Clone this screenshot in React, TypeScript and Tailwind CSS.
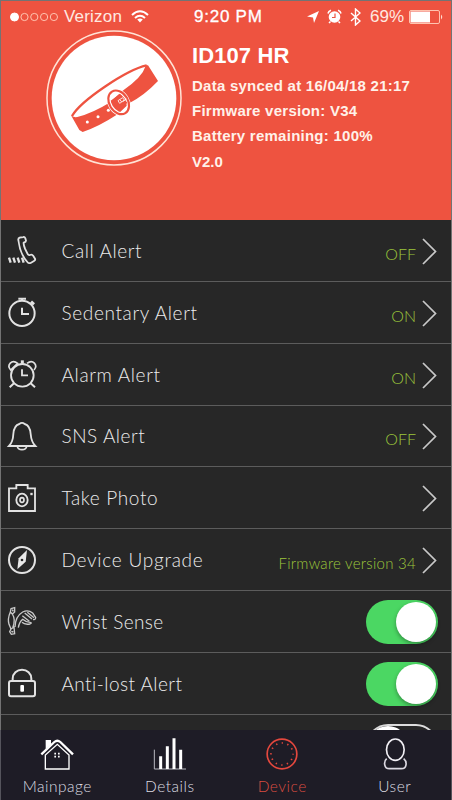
import React, { useState } from 'react';

const CallIcon = () => (
  <>
    <path d="M31 12Q30 7 35 5L46 3Q50 2 52 7L54 14Q54 18 47 20Q46 24 51 38L58 52Q61 59 66 57Q72 54 76 60L81 68Q83 72 78 75L68 81Q62 83 58 78Q36 54 31 12Z" strokeWidth="5.5" />
    <path d="M3 65L8 80M16 65L21 80M29 65L34 80M42 65L47 80" strokeWidth="7" />
  </>
);

const StopwatchIcon = () => (
  <>
    <circle cx="42" cy="46" r="38" />
    <path d="M42 29V48H63" />
    <path d="M31 2H54M42 2V8" strokeWidth="6" />
    <path d="M69 11L78 19" strokeWidth="9" />
  </>
);

const AlarmIcon = () => (
  <>
    <circle cx="43" cy="46" r="34" strokeWidth="5.5" />
    <path d="M42 28V46H60" strokeWidth="5.5" />
    <path d="M43 1V11" strokeWidth="9" />
    <path d="M8 30C-5 16 11 -4 29 10L8 30ZM78 30C91 16 75 -4 57 10" strokeWidth="5" />
    <path d="M18 70L5 82M68 70L81 82" strokeWidth="6" />
  </>
);

const BellIcon = () => (
  <>
    <path d="M3 72Q15 60 16 36Q18 10 34 6Q42 -1 50 6Q66 10 68 36Q70 60 82 72Z" strokeWidth="5.5" />
    <path d="M28 74Q30 83 42 83Q54 83 56 74" strokeWidth="5" />
  </>
);

const CameraIcon = () => (
  <>
    <path d="M3 13H25V3H59V13H81V81H3Z" strokeWidth="5.5" />
    <ellipse cx="42" cy="48" rx="17" ry="19" strokeWidth="5.5" />
    <ellipse cx="42" cy="48" rx="6" ry="7" strokeWidth="5" />
    <path d="M67 30H74" strokeWidth="7" />
  </>
);

const CompassIcon = () => (
  <>
    <circle cx="42" cy="42" r="39" strokeWidth="6" />
    <path d="M57 12L53 47L28 70L32 37Z" fill="#e8e8e8" stroke="none" />
    <circle cx="42" cy="42" r="4" fill="#272727" stroke="none" />
  </>
);

const WristIcon = () => (
  <g strokeWidth="4" stroke="#c9c9c9">
    <path d="M9 5L20 2L20 15L13 21L7 15ZM7 15Q-2 36 3 52L9 66M13 21Q24 38 14 62M9 66L18 60L20 80L10 82L5 74ZM13 8L16 13M10 73L16 75" />
    <path d="M21 60Q22 28 44 15Q60 7 74 18L83 31Q83 40 75 37" />
    <path d="M31 62Q34 44 44 37Q54 46 66 46Q74 48 66 51Q50 54 42 46" />
    <path d="M50 18L72 36M43 26L64 43M58 16L78 32" />
  </g>
);

const LockIcon = () => (
  <>
    <rect x="3" y="36" width="78" height="46" rx="6" />
    <path d="M14 36V29A28 27 0 0 1 70 29V36" />
    <rect x="37" y="48" width="11" height="20" rx="3" fill="#fff" stroke="none" />
  </>
);

const rows = [
  { label: 'Call Alert', icon: CallIcon, value: 'OFF', spacing: 'tracking-[0.6px]' },
  { label: 'Sedentary Alert', icon: StopwatchIcon, value: 'ON', spacing: 'tracking-[0.65px]' },
  { label: 'Alarm Alert', icon: AlarmIcon, value: 'ON', spacing: 'tracking-[0.65px]' },
  { label: 'SNS Alert', icon: BellIcon, value: 'OFF', spacing: 'tracking-[0.55px]' },
  { label: 'Take Photo', icon: CameraIcon, value: '', spacing: 'tracking-[0.65px]' },
  { label: 'Device Upgrade', icon: CompassIcon, value: 'Firmware version 34', spacing: 'tracking-[0.75px]' },
];

const Toggle = ({ on, onClick }: { on: boolean; onClick: () => void }) => (
  <button
    onClick={onClick}
    className={`mr-px mt-px flex h-11 w-[72px] items-center rounded-full ${on ? 'justify-end bg-[#4bd763] pr-[2px]' : 'justify-start border-2 border-[#dedede]'}`}
  >
    <span className="size-10 rounded-full bg-white shadow-[0_2px_4px_rgba(0,0,0,0.35)]" />
  </button>
);

const Row = ({ icon: Icon, label, spacing, children }: { icon?: React.FC; label: string; spacing?: string; children: React.ReactNode }) => (
  <div className="flex h-[61.85px] shrink-0 items-center border-b border-[#5c5c5c] pl-[7px] pr-[12px]">
    <svg width="28" height="28" viewBox="0 0 84 84" fill="none" stroke="#e2e2e2" strokeWidth="6" className="shrink-0 overflow-visible">
      {Icon && <Icon />}
    </svg>
    <span className={`ml-[25.5px] mt-px flex-1 whitespace-nowrap text-[19px] font-light leading-6 text-[#ececec] ${spacing}`}>{label}</span>
    {children}
  </div>
);

const StatusBar = () => (
  <div className="flex h-[29px] items-center pl-[9px] pt-[2px] font-['Liberation_Sans',sans-serif] text-[17px] leading-5 text-[#ffe9e0]">
    <svg width="50" height="10" viewBox="0 0 50 10" fill="none" stroke="#ffc4b0">
      <circle cx="4.5" cy="5" r="4" fill="#fff" stroke="#fff" />
      <circle cx="14.5" cy="5" r="3.6" />
      <circle cx="24.3" cy="5" r="3.6" />
      <circle cx="34.1" cy="5" r="3.6" />
      <circle cx="43.9" cy="5" r="3.6" />
    </svg>
    <span className="ml-[4px] w-[67px] tracking-[0.2px]">Verizon</span>
    <svg width="18" height="13" viewBox="0 0 18 13" fill="none" stroke="#fff" strokeWidth="2">
      <path d="M1 5Q9 -2.4 17 5M4 8Q9 3.6 14 8" />
      <path d="M6.2 9.6Q9 7.5 11.8 9.6L9 12.5Z" fill="#fff" stroke="none" />
    </svg>
    <span className="ml-[45px] w-[113px] whitespace-nowrap tracking-[0.75px] text-white [-webkit-text-stroke:0.3px_white]">9:20 PM</span>
    <svg width="12" height="12" viewBox="0 0 12 12" fill="#fff">
      <path d="M12 0L7 12L6 6.5L0 5.5Z" />
    </svg>
    <svg width="15" height="15" viewBox="0 0 15 15" fill="none" className="ml-[8px]">
      <circle cx="7.5" cy="8" r="5.8" fill="#fff" />
      <path d="M1 4.5Q1.5 2 4 1.2M14 4.5Q13.5 2 11 1.2" stroke="#fff" strokeWidth="1.6" />
      <path d="M3.5 12.5L2 14M11.5 12.5L13 14" stroke="#fff" strokeWidth="1.5" />
      <path d="M8 4.5V8.5H5" stroke="#ee5340" strokeWidth="1.2" />
    </svg>
    <svg width="11" height="18" viewBox="0 0 11 18" fill="none" stroke="#fff" strokeWidth="1.4" className="ml-[8px]">
      <path d="M1 5L10 13L5.5 17V1L10 5L1 13" />
    </svg>
    <span className="ml-[9px] w-[39px] text-[17px]">69%</span>
    <svg width="35" height="14" viewBox="0 0 35 14" fill="none">
      <rect x="0.5" y="0.5" width="30" height="13" rx="1.5" stroke="#ffc4b0" />
      <rect x="1.5" y="1.5" width="19.5" height="11" fill="#fff" />
      <path d="M32 4.5Q34.5 7 32 9.5Z" fill="#ffd9cc" />
    </svg>
  </div>
);

const DeviceBadge = () => (
  <svg width="136" height="136" viewBox="46 28 408 408" fill="none" className="ml-[44.5px]">
    <circle cx="250" cy="232" r="201" stroke="#ffe3d6" strokeWidth="4.5" />
    <circle cx="250" cy="232" r="187" fill="#fff" />
    <path d="M124 286C150 240 286 148 348 134" stroke="#ee5340" strokeWidth="7" />
    <path d="M121 284Q127 291 140 289Q188 276 236 246L276 210Q334 172 346 134L352 134L382 181Q340 225 298 246L262 280Q204 318 156 334L146 328Z" fill="#ee5340" />
    <ellipse cx="264" cy="245" rx="27" ry="38" transform="rotate(-32 264 245)" stroke="#fff" strokeWidth="12" />
    <path d="M240 240L268 220L290 246L264 272Z" fill="#ee5340" />
    <ellipse cx="264" cy="245" rx="28" ry="38" transform="rotate(-32 264 245)" stroke="#ee5340" strokeWidth="6.5" />
    <path d="M262 240L276 231L281 238L267 248ZM268 237L273 244M276 243L288 235" stroke="#fff" strokeWidth="2.5" />
    <circle cx="170" cy="304" r="4.5" fill="#fff" />
    <circle cx="202" cy="288" r="4.5" fill="#fff" />
    <circle cx="233" cy="269" r="4.5" fill="#fff" />
  </svg>
);

const HouseIcon = () => (
  <>
    <path d="M138 121H154V135L138 148Z" fill="#fff" />
    <path d="M125 164L164 127Q173 119 182 127L220 164" stroke="#fff" strokeWidth="7" />
    <path d="M137 166V208H208V166L173 134Z" stroke="#fff" strokeWidth="4" />
    <path d="M164 162H169M175 162H180M164 171H169M175 171H180" stroke="#fff" strokeWidth="5" />
  </>
);

const ChartIcon = () => (
  <>
    <path d="M461 150V208H556" stroke="#b9b9c0" strokeWidth="3" />
    <path d="M480 170V208M500 140V208M520 116V208M540 150V208" stroke="#fff" strokeWidth="9" />
  </>
);

const DialIcon = () => (
  <>
    <circle cx="169" cy="163" r="44.5" stroke="#e5483e" strokeWidth="5" />
    <circle cx="169" cy="163" r="33" stroke="#e5483e" strokeWidth="5" strokeDasharray="4 13.28" strokeDashoffset="2" />
  </>
);

const UserIcon = () => (
  <>
    <path d="M480 177C470 186 472 207 488 207H524C541 207 542 186 531 177" stroke="#dcd9e2" strokeWidth="5" />
    <ellipse cx="506" cy="150" rx="26.5" ry="32" stroke="#f2f0f5" strokeWidth="5" />
  </>
);

const tabs = [
  { label: 'Mainpage', icon: HouseIcon, box: '121 115 102 96' },
  { label: 'Details', icon: ChartIcon, box: '457 115 102 96' },
  { label: 'Device', icon: DialIcon, box: '118 115 102 96' },
  { label: 'User', icon: UserIcon, box: '454 115 102 96' },
];

const App: React.FC = () => {
  const [wrist, setWrist] = useState(true);
  const [antiLost, setAntiLost] = useState(true);
  const [extra, setExtra] = useState(false);

  return (
    <div className="flex h-[800px] w-[452px] flex-col overflow-hidden bg-[#272727] font-['Lato',sans-serif]">
      <div className="flex min-h-0 flex-1 flex-col overflow-hidden border-x border-t border-[#737373]">
        <header className="h-[219px] shrink-0 bg-[#ee5340]">
          <StatusBar />
          <div className="flex">
            <DeviceBadge />
            <div className="ml-[10.5px] whitespace-nowrap pt-[11px] font-['Liberation_Sans',sans-serif] text-[15px] font-bold text-[#fff1e9]">
              <h1 className="text-[22px] leading-[29px] tracking-[0.1px] text-white">ID107 HR</h1>
              <p className="mt-[3px] leading-[25px] tracking-[0.25px]">Data synced at 16/04/18 21:17</p>
              <p className="leading-[25px] tracking-[0.25px]">Firmware version: V34</p>
              <p className="leading-[25px] tracking-[0.25px]">Battery remaining: 100%</p>
              <p className="mt-px leading-[26px]">V2.0</p>
            </div>
          </div>
        </header>

        {rows.map((row) => (
          <Row key={row.label} icon={row.icon} label={row.label} spacing={row.spacing}>
            <span className={`mt-[7px] whitespace-nowrap font-light text-[#9dc63b] ${row.value.length > 3 ? 'text-[15px] tracking-[0.27px]' : 'text-[16px]'}`}>
              {row.value}
            </span>
            <svg width="15" height="27" viewBox="0 0 15 27" fill="none" stroke="#c9c9c9" strokeWidth="1.7" className="ml-[6px] mr-[2px] mt-[2px]">
              <path d="M1 1L13.5 13.5L1 26" />
            </svg>
          </Row>
        ))}
        <Row icon={WristIcon} label="Wrist Sense" spacing="tracking-[0.4px]">
          <Toggle on={wrist} onClick={() => setWrist(!wrist)} />
        </Row>
        <Row icon={LockIcon} label="Anti-lost Alert" spacing="tracking-[0.45px]">
          <Toggle on={antiLost} onClick={() => setAntiLost(!antiLost)} />
        </Row>
        <Row label="">
          <Toggle on={extra} onClick={() => setExtra(!extra)} />
        </Row>
      </div>

      <nav className="grid h-[70px] shrink-0 grid-cols-4 border-x border-[#55545c] bg-[#1e1c26]">
        {tabs.map(({ label, icon: Icon, box }) => (
          <div key={label} className={`flex flex-col items-center pt-[8px] ${label === 'Device' ? 'text-[#d94c41]' : 'text-[#dddce2]'}`}>
            <svg width="34" height="32" viewBox={box} fill="none">
              <Icon />
            </svg>
            <span className="mt-[5.5px] text-[15.5px] font-light leading-5 tracking-[0.5px]">{label}</span>
          </div>
        ))}
      </nav>
    </div>
  );
};

export default App;
